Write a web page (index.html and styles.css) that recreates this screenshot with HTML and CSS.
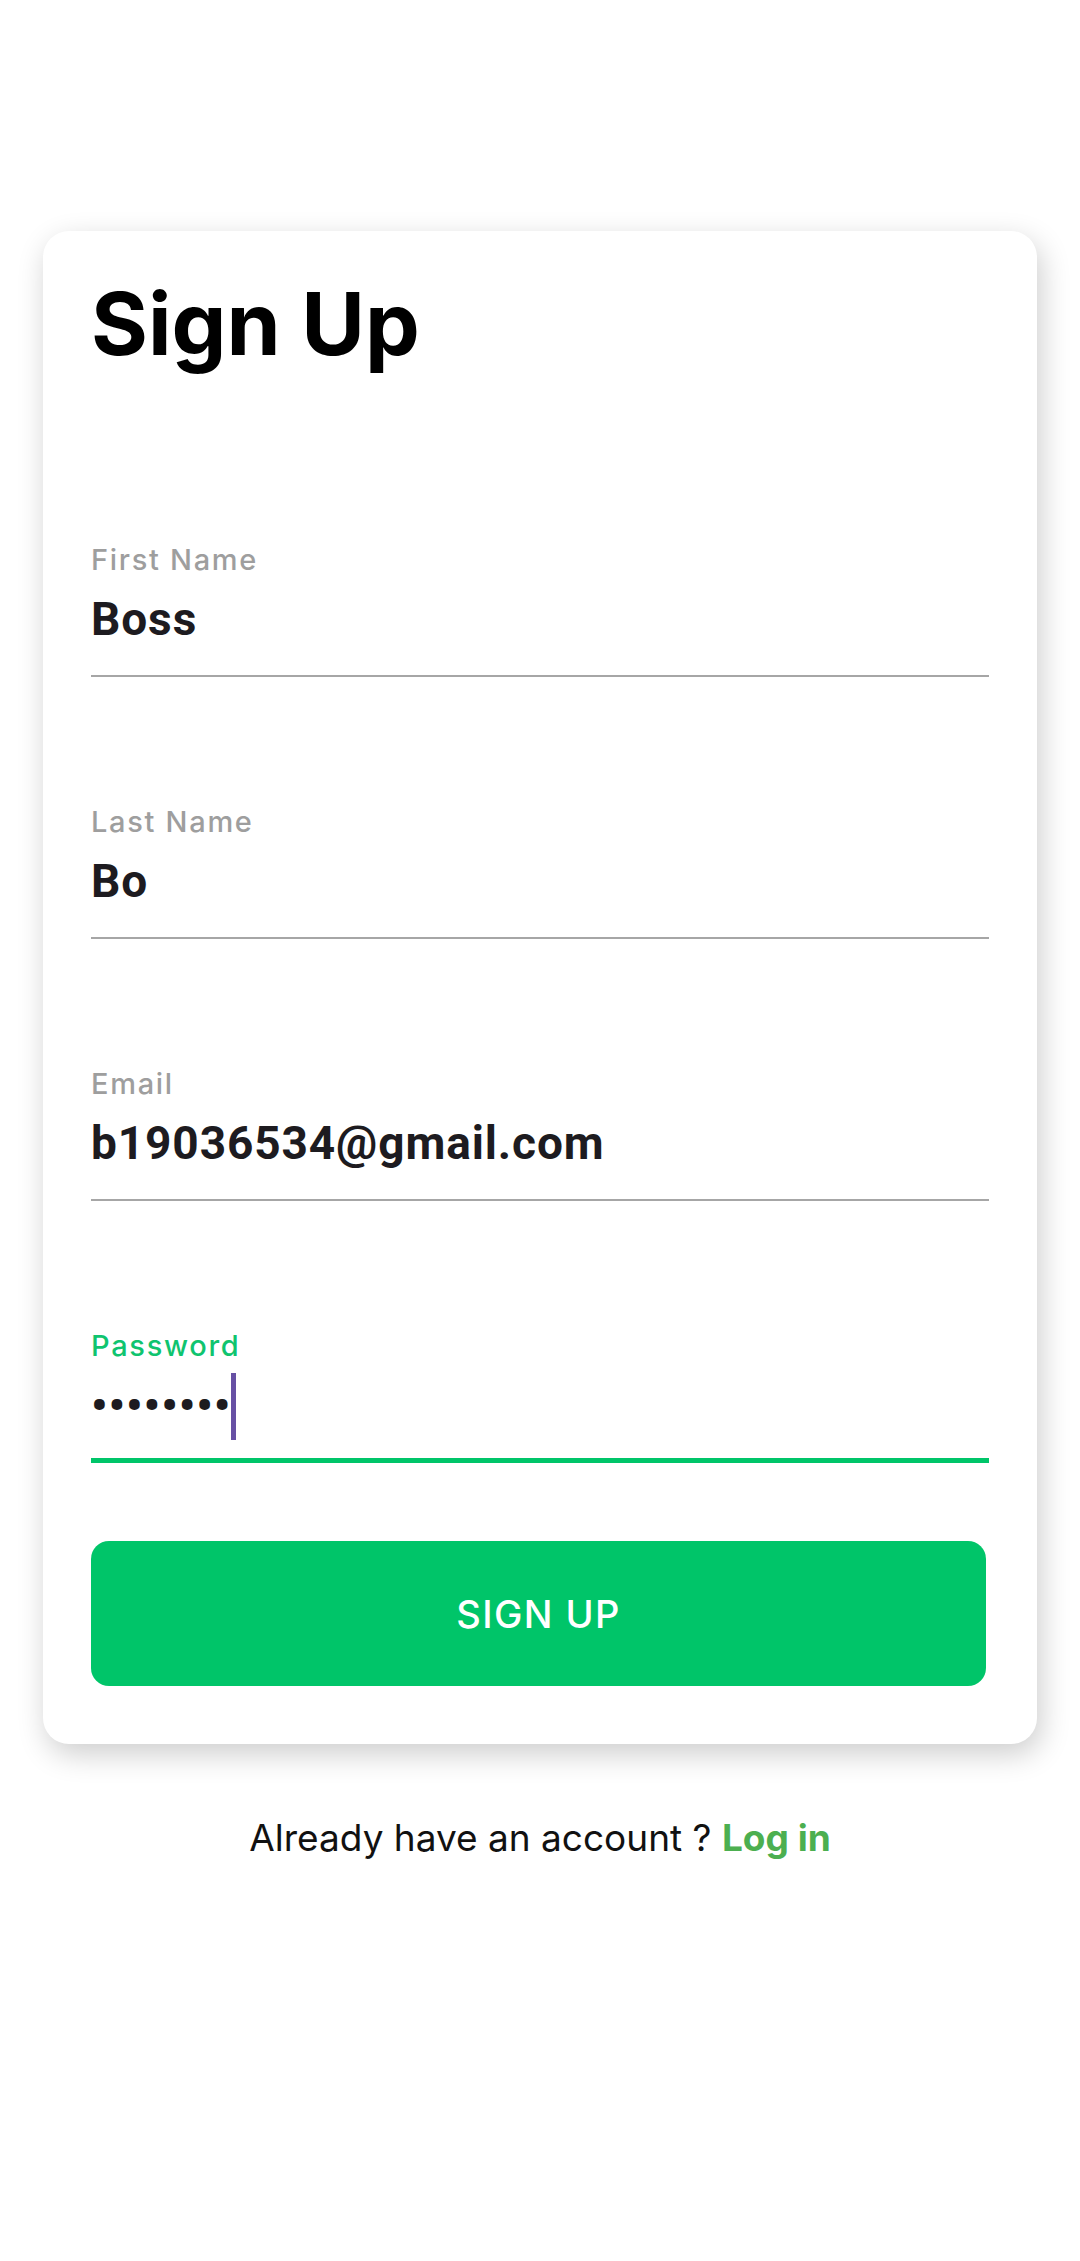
FILE: index.html
```html
<!DOCTYPE html>
<html lang="en">
<head>
<meta charset="utf-8">
<title>Sign Up</title>
<link rel="stylesheet" href="styles.css">
</head>
<body>
<main class="screen">
  <section class="card">
    <h1 class="title">Sign Up</h1>
    <div class="field">
      <div class="label">First Name</div>
      <div class="value">Boss</div>
      <div class="line"></div>
    </div>
    <div class="field">
      <div class="label">Last Name</div>
      <div class="value">Bo</div>
      <div class="line"></div>
    </div>
    <div class="field">
      <div class="label">Email</div>
      <div class="value">b19036534@gmail.com</div>
      <div class="line"></div>
    </div>
    <div class="field field-focus">
      <div class="label">Password</div>
      <div class="value"><span class="dots">••••••••</span><span class="cursor"></span></div>
      <div class="line"></div>
    </div>
    <button class="btn" type="button">SIGN UP</button>
  </section>
  <p class="footer">Already have an account ? <span class="link">Log in</span></p>
</main>
</body>
</html>
```
FILE: styles.css
```css
* { box-sizing: border-box; }
html, body { margin: 0; padding: 0; background: #ffffff; }
body { font-family: "Inter", "Roboto", sans-serif; }
.screen {
  width: 1080px;
  min-height: 2261px;
  padding-top: 231px;
  display: flex;
  flex-direction: column;
  align-items: center;
}
.card {
  width: 994px;
  background: #ffffff;
  border-radius: 26px;
  box-shadow: 4px 10px 30px rgba(0, 0, 0, 0.2);
  padding: 43px 48px 58px 48px;
  display: flex;
  flex-direction: column;
}
.title {
  margin: 0 0 168px 0;
  font-family: "Inter", sans-serif;
  font-weight: 700;
  font-size: 87px;
  line-height: 100px;
  color: #000000;
}
.field { display: flex; flex-direction: column; }
.field + .field { margin-top: 127px; }
.label {
  font-family: "Inter", sans-serif;
  font-weight: 500;
  font-size: 29px;
  line-height: 36px;
  color: #9e9e9e;
  letter-spacing: 1.7px;
}
.value {
  font-family: "Roboto", sans-serif;
  font-weight: 700;
  font-size: 46px;
  line-height: 60px;
  height: 97px;
  padding: 11px 0 26px 0;
  color: #1d1b20;
  letter-spacing: 0.9px;
  white-space: nowrap;
}
.line { height: 2px; background: #a6a6a6; }
.field-focus .label { color: #0fc46f; }
.field-focus .value { height: 94px; padding-bottom: 23px; }
.field-focus .line { height: 5px; background: #00c569; }
.dots { letter-spacing: 1px; }
.cursor {
  display: inline-block;
  width: 5px;
  height: 67px;
  margin-top: -6px;
  margin-left: 0;
  background: #6750a4;
  vertical-align: -19px;
}
.btn {
  margin-top: 78px;
  margin-right: 3px;
  height: 145px;
  border: 0;
  border-radius: 18px;
  background: #00c569;
  color: #ffffff;
  font-family: "Inter", sans-serif;
  font-weight: 500;
  font-size: 38px;
  letter-spacing: 1.4px;
  padding: 0;
}
.footer {
  margin: 71px 0 0 0;
  font-family: "Inter", sans-serif;
  font-size: 37px;
  line-height: 46px;
  color: #111111;
  text-align: center;
}
.link { color: #4caf50; font-weight: 700; }
```
